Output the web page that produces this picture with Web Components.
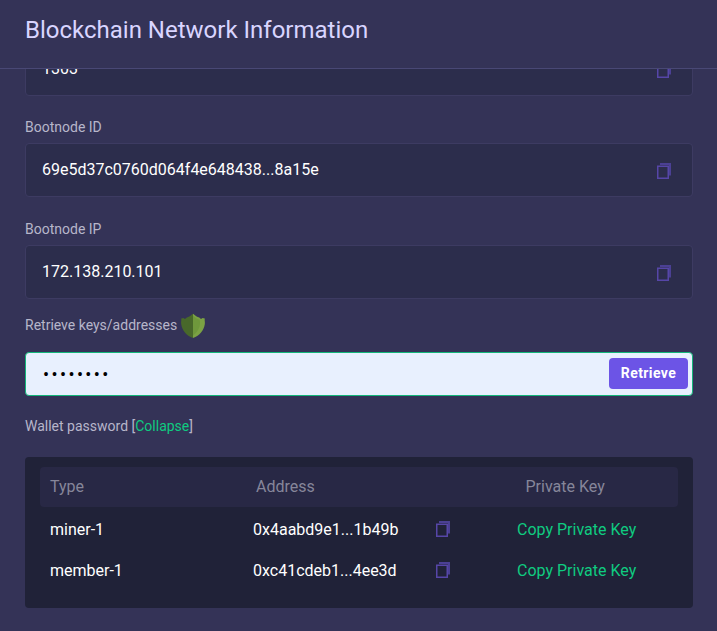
<!DOCTYPE html>
<html lang="en">
<head>
<meta charset="utf-8">
<title>Blockchain Network Information</title>
<style>
html,body{margin:0;height:100%;overflow:hidden;background:#343357}
body{font-family:Roboto,"Liberation Sans",sans-serif;font-size:16px;color:#fff}
</style>
</head>
<body>
<network-dialog>
  <span slot="title">Blockchain Network Information</span>
  <info-field value="1303"></info-field>
  <info-field label="Bootnode ID" value="69e5d37c0760d064f4e648438...8a15e"></info-field>
  <info-field label="Bootnode IP" value="172.138.210.101"></info-field>
  <key-retriever></key-retriever>
  <wallet-table>
    <wallet-row type="miner-1" address="0x4aabd9e1...1b49b"></wallet-row>
    <wallet-row type="member-1" address="0xc41cdeb1...4ee3d"></wallet-row>
  </wallet-table>
</network-dialog>
<script>
const define = (name, render) => customElements.define(name, class extends HTMLElement {
  constructor() {
    super();
    this.attachShadow({mode: 'open'});
  }
  connectedCallback() {
    this.shadowRoot.innerHTML = render(this);
  }
});

define('copy-icon', () => `
<style>:host{display:block;width:16px;height:18px;flex:none}svg{display:block}</style>
<svg width="16" height="18" viewBox="0 0 16 18" fill="none" stroke="#5646a8" stroke-width="1.5">
  <path d="M4 2H14V13.5" stroke-width="2" stroke="#4b4094"/>
  <rect x="1.75" y="4.25" width="10.5" height="12"/>
</svg>`);

define('shield-icon', () => `
<style>:host{display:block;width:26px;height:26px;flex:none}svg{display:block}</style>
<svg width="26" height="26" viewBox="0 0 26 26">
  <path fill="#48682a" d="M13 .8C10.8 2.8 8.6 4 6.8 4.5L5 6 3.4 4.9 1.2 5.6C1.6 8 .8 8.8 1.2 11.2C2.4 17.8 6 22.3 13 25Z"/>
  <path fill="#7ba244" d="M13 .8C15.2 2.8 17.4 4 19.2 4.5L21 6 22.6 4.9 24.8 5.6C24.4 8 25.2 8.8 24.8 11.2C23.6 17.8 20 22.3 13 25Z"/>
  <path fill="#6f983c" d="M13 2.8C15.6 5.2 17.6 6.4 19.6 6.8C21 12 19.2 18 13 22.4Z"/>
</svg>`);

define('network-dialog', () => `
<style>
:host{display:flex;flex-direction:column;height:100vh;background:#343357}
header{height:69px;flex:none;box-sizing:border-box;padding:14px 25px 0;border-bottom:1px solid #494875;font-size:24px;line-height:32px;color:#d9d5ff}
main{flex:1;min-height:0;overflow:hidden;padding:0 24px 0 25px}
.content{display:flex;flex-direction:column;margin-top:-27px}
::slotted(info-field:nth-of-type(3)){margin-top:1px}
</style>
<header><slot name="title"></slot></header>
<main><div class="content"><slot></slot></div></main>`);

define('info-field', el => `
<style>
:host{display:block}
label{display:block;height:47px;box-sizing:border-box;padding-top:21px;font-size:14px;line-height:20px;color:#b7b6ca}
.box{display:flex;align-items:center;justify-content:space-between;height:54px;box-sizing:border-box;border:1px solid #3d3b62;border-radius:4px;background:#2c2d4c;padding:0 20px 0 16px;line-height:24px}
copy-icon{margin-top:2px}
</style>
${el.hasAttribute('label') ? `<label>${el.getAttribute('label')}</label>` : ''}
<div class="box"><span>${el.getAttribute('value')}</span><copy-icon></copy-icon></div>`);

define('key-retriever', () => `
<style>
:host{display:block;font-size:14px;line-height:20px;color:#b7b6ca}
.top{display:flex;align-items:center;height:26px;gap:3px;padding:14px 0 13px}
.top b{font-weight:400;margin-bottom:2px}
.field{display:flex;align-items:center;height:44px;box-sizing:border-box;border:1px solid #13b67a;border-radius:4px;background:#e8f0fe;padding:0 4px 0 17px}
input{flex:1;min-width:0;border:0;outline:0;padding:0;background:none;color:#000;font:18px Roboto,sans-serif;letter-spacing:2.4px}
button{width:79px;height:31px;margin:0 0 1px;border:0;border-radius:4px;background:#6c54e6;color:#fff;font:700 14px Roboto,sans-serif;padding:0 0 2px;letter-spacing:.4px}
p{margin:20px 0 21px}
span{color:#0fcb80}
</style>
<div class="top"><b>Retrieve keys/addresses</b><shield-icon></shield-icon></div>
<div class="field"><input type="password" value="password"><button>Retrieve</button></div>
<p>Wallet password [<span>Collapse</span>]</p>`);

define('wallet-table', () => `
<style>
:host{display:block;height:151px;box-sizing:border-box;padding:10px 15px;border-radius:4px;background:#202238;line-height:24px}
.head{display:grid;grid-template-columns:206px 269.5px 1fr;align-items:center;height:40px;padding-left:10px;border-radius:4px;background:#282845;color:#86869a;margin-bottom:2px}
</style>
<div class="head"><span>Type</span><span>Address</span><span>Private Key</span></div>
<slot></slot>`);

define('wallet-row', el => `
<style>
:host{display:grid;grid-template-columns:203px 182px 82px 1fr;align-items:center;height:41px;padding-left:10px}
copy-icon{margin-bottom:2px}
a{color:#0fcb80}
</style>
<span>${el.getAttribute('type')}</span><span>${el.getAttribute('address')}</span><copy-icon></copy-icon><a>Copy Private Key</a>`);
</script>
</body>
</html>
